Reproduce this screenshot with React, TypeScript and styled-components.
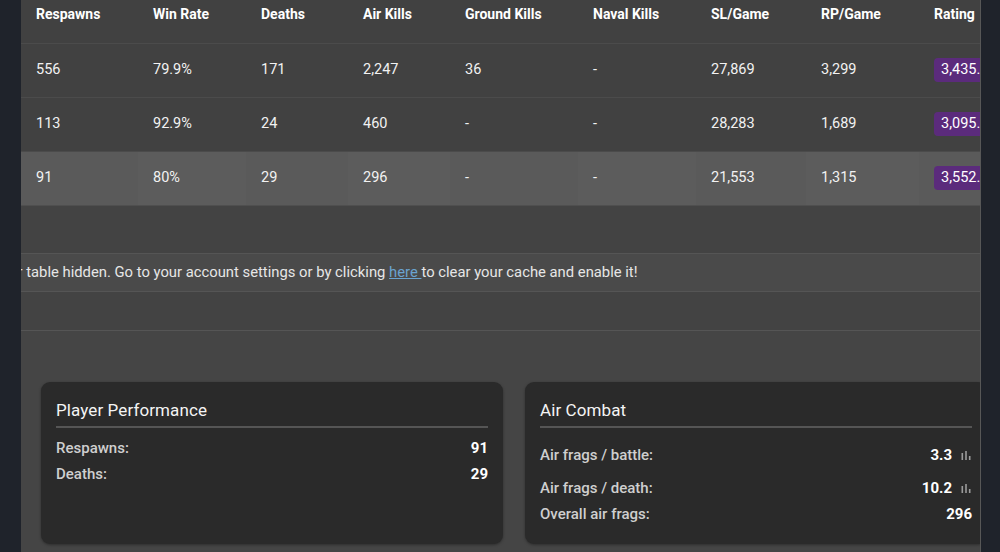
import React from "react";
import styled, { createGlobalStyle } from "styled-components";

const GlobalStyle = createGlobalStyle`
  html, body {
    margin: 0;
    padding: 0;
    background: #1f232b;
    font-family: Roboto, "Liberation Sans", Arial, sans-serif;
    overflow: hidden;
  }
  * { box-sizing: border-box; }
`;

type VehicleRow = {
  respawns: string;
  winRate: string;
  deaths: string;
  airKills: string;
  groundKills: string;
  navalKills: string;
  slGame: string;
  rpGame: string;
  rating: string;
};

const columns = [
  { label: "Respawns", width: 117 },
  { label: "Win Rate", width: 108 },
  { label: "Deaths", width: 102 },
  { label: "Air Kills", width: 102 },
  { label: "Ground Kills", width: 128 },
  { label: "Naval Kills", width: 118 },
  { label: "SL/Game", width: 110 },
  { label: "RP/Game", width: 113 },
  { label: "Rating", width: 110 },
];

const rows: VehicleRow[] = [
  { respawns: "556", winRate: "79.9%", deaths: "171", airKills: "2,247", groundKills: "36", navalKills: "-", slGame: "27,869", rpGame: "3,299", rating: "3,435.12" },
  { respawns: "113", winRate: "92.9%", deaths: "24", airKills: "460", groundKills: "-", navalKills: "-", slGame: "28,283", rpGame: "1,689", rating: "3,095.40" },
  { respawns: "91", winRate: "80%", deaths: "29", airKills: "296", groundKills: "-", navalKills: "-", slGame: "21,553", rpGame: "1,315", rating: "3,552.87" },
];

const BarsIcon = () => (
  <svg width="10" height="10" viewBox="0 0 10 10" fill="#9b9b9b">
    <rect x="0.5" y="3" width="1.6" height="7" />
    <rect x="4.2" y="1" width="1.6" height="9" />
    <rect x="7.9" y="6" width="1.6" height="4" />
  </svg>
);

const App = () => {
  return (
    <>
      <GlobalStyle />
      <Page>
        <SideStrip />
        <Main>
          <Content>
            <Table>
              <colgroup>
                {columns.map((c) => (
                  <col key={c.label} style={{ width: c.width }} />
                ))}
              </colgroup>
              <thead>
                <tr>
                  {columns.map((c) => (
                    <Th key={c.label}>{c.label}</Th>
                  ))}
                </tr>
              </thead>
              <tbody>
                {rows.map((r, i) => {
                  const active = i === rows.length - 1;
                  return (
                    <Tr key={i} $active={active}>
                      <Td $active={active} $odd>{r.respawns}</Td>
                      <Td $active={active}>{r.winRate}</Td>
                      <Td $active={active} $odd>{r.deaths}</Td>
                      <Td $active={active}>{r.airKills}</Td>
                      <Td $active={active} $odd>{r.groundKills}</Td>
                      <Td $active={active}>{r.navalKills}</Td>
                      <Td $active={active} $odd>{r.slGame}</Td>
                      <Td $active={active}>{r.rpGame}</Td>
                      <Td $active={active} $odd>
                        <RatingBadge>{r.rating}</RatingBadge>
                      </Td>
                    </Tr>
                  );
                })}
              </tbody>
            </Table>

            <Spacer $height={48} />
            <Notice>
              <NoticeText>
                Your table hidden. Go to your account settings or by clicking{" "}
                <NoticeLink href="#">here </NoticeLink>to clear your cache and enable it!
              </NoticeText>
            </Notice>
            <Spacer $height={39} />

            <CardsSection>
              <Card>
                <CardTitle>Player Performance</CardTitle>
                <StatList>
                  <StatRow>
                    <StatLabel>Respawns:</StatLabel>
                    <StatValue>91</StatValue>
                  </StatRow>
                  <StatRow>
                    <StatLabel>Deaths:</StatLabel>
                    <StatValue>29</StatValue>
                  </StatRow>
                </StatList>
              </Card>
              <Card>
                <CardTitle>Air Combat</CardTitle>
                <StatList>
                  <StatRow $withIcon>
                    <StatLabel>Air frags / battle:</StatLabel>
                    <StatValue>
                      3.3
                      <IconButton>
                        <BarsIcon />
                      </IconButton>
                    </StatValue>
                  </StatRow>
                  <StatRow $withIcon>
                    <StatLabel>Air frags / death:</StatLabel>
                    <StatValue>
                      10.2
                      <IconButton>
                        <BarsIcon />
                      </IconButton>
                    </StatValue>
                  </StatRow>
                  <StatRow>
                    <StatLabel>Overall air frags:</StatLabel>
                    <StatValue>296</StatValue>
                  </StatRow>
                </StatList>
              </Card>
            </CardsSection>
          </Content>
        </Main>
        <SideStrip $right />
      </Page>
    </>
  );
};

export default App;

const Page = styled.div`
  display: flex;
  width: 1000px;
  height: 552px;
  background: #1f232b;
`;

const SideStrip = styled.div<{ $right?: boolean }>`
  flex: 0 0 ${(p) => (p.$right ? "19px" : "21px")};
  background: #1f232b;
`;

const Main = styled.div`
  flex: 0 0 960px;
  height: 552px;
  overflow: hidden;
  background: #444444;
  border-right: 1px solid #575757;
`;

const Content = styled.div`
  width: 1008px;
  display: flex;
  flex-direction: column;
`;

const Table = styled.table`
  width: 1008px;
  table-layout: fixed;
  border-collapse: collapse;
  background: #414141;
  color: #f2f2f2;
  font-size: 14.5px;
`;

const Th = styled.th`
  height: 43px;
  padding: 0 15px 14px;
  text-align: left;
  font-size: 14px;
  font-weight: 700;
  color: #ffffff;
  line-height: 20px;
  vertical-align: middle;
  border-bottom: 1px solid #4b4b4b;
  white-space: nowrap;
`;

const Tr = styled.tr<{ $active?: boolean }>`
  height: 54px;
  border-bottom: 1px solid ${(p) => (p.$active ? "#4f4f4f" : "#4b4b4b")};
`;

const Td = styled.td<{ $active?: boolean; $odd?: boolean }>`
  padding: 0 15px;
  white-space: nowrap;
  overflow: hidden;
  line-height: 20px;
  background: ${(p) => (p.$active ? (p.$odd ? "#5a5a5a" : "#5c5c5c") : "#414141")};
`;

const RatingBadge = styled.span`
  display: inline-block;
  padding: 2px 7px;
  border-radius: 4px;
  background: #5b2b7c;
  color: #ffffff;
`;

const Spacer = styled.div<{ $height: number }>`
  height: ${(p) => p.$height}px;
  background: #434343;
  border-bottom: 1px solid #555555;
`;

const Notice = styled.div`
  height: 38px;
  display: flex;
  align-items: center;
  background: #4a4a4a;
  border-bottom: 1px solid #555555;
  overflow: hidden;
`;

const NoticeText = styled.p`
  margin: 0;
  padding-left: 15px;
  text-indent: -43.5px;
  white-space: nowrap;
  font-size: 14.8px;
  color: #e6e6e6;
`;

const NoticeLink = styled.a`
  color: #6aa3d0;
  text-decoration: underline;
`;

const CardsSection = styled.div`
  display: grid;
  grid-template-columns: 462px 462px;
  gap: 22px;
  padding: 51px 20px 20px;
  background: #454545;
`;

const Card = styled.div`
  height: 162px;
  padding: 15px 15px 0;
  background: #2a2a2a;
  border-radius: 9px;
  box-shadow: 0 1px 3px rgba(0, 0, 0, 0.35);
`;

const CardTitle = styled.div`
  font-size: 17px;
  line-height: 24px;
  color: #f4f4f4;
  padding-top: 1px;
  padding-bottom: 4px;
  border-bottom: 2px solid #555555;
  letter-spacing: 0.1px;
`;

const StatList = styled.div`
  display: flex;
  flex-direction: column;
  padding-top: 7px;
`;

const StatRow = styled.div<{ $withIcon?: boolean }>`
  display: flex;
  justify-content: space-between;
  align-items: center;
  height: ${(p) => (p.$withIcon ? "33px" : "26px")};
  padding-top: ${(p) => (p.$withIcon ? "7px" : "0")};
`;

const StatLabel = styled.span`
  font-size: 15px;
  font-weight: 500;
  color: #cfcfcf;
`;

const StatValue = styled.span`
  display: flex;
  align-items: center;
  gap: 8px;
  font-size: 15px;
  font-weight: 700;
  color: #ffffff;
`;

const IconButton = styled.span`
  display: inline-flex;
  align-items: center;
  justify-content: center;
  width: 12px;
  height: 12px;
`;
